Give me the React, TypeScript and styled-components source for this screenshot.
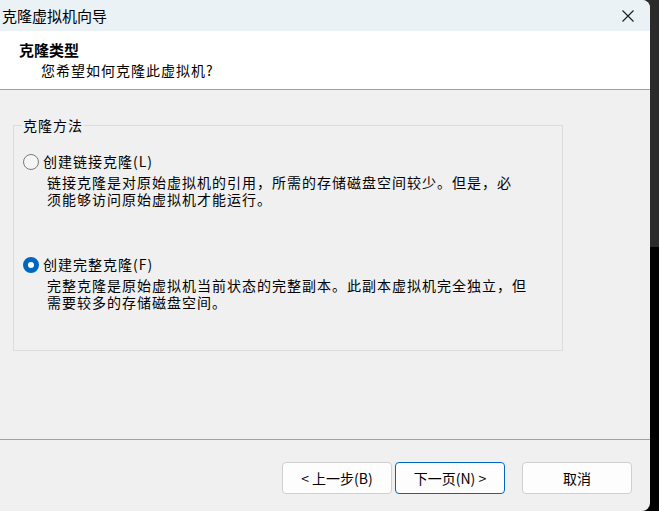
import React, { useState } from 'react';
import styled, { createGlobalStyle } from 'styled-components';

const GlobalStyle = createGlobalStyle`
  html, body {
    margin: 0;
    padding: 0;
  }
  body {
    min-height: 511px;
    background: linear-gradient(#2b2b2b 0, #2b2b2b 247px, #000 247px);
    font-family: "Noto Sans CJK SC", "Microsoft YaHei", sans-serif;
    color: #000;
  }
`;

type CloneMode = 'linked' | 'full';

const options: { id: CloneMode; label: string; lines: string[] }[] = [
  {
    id: 'linked',
    label: '创建链接克隆(L)',
    lines: ['链接克隆是对原始虚拟机的引用，所需的存储磁盘空间较少。但是，必', '须能够访问原始虚拟机才能运行。'],
  },
  {
    id: 'full',
    label: '创建完整克隆(F)',
    lines: ['完整克隆是原始虚拟机当前状态的完整副本。此副本虚拟机完全独立，但', '需要较多的存储磁盘空间。'],
  },
];

const App = () => {
  const [mode, setMode] = useState<CloneMode>('full');

  return (
    <>
      <GlobalStyle />
      <Window>
        <TitleBar>
          <span>克隆虚拟机向导</span>
          <CloseButton aria-label="关闭">
            <svg width="12" height="12" viewBox="0 0 12 12">
              <path d="M0.5 0.5 L11.5 11.5 M11.5 0.5 L0.5 11.5" stroke="#1a1a1a" strokeWidth="1.1" fill="none" />
            </svg>
          </CloseButton>
        </TitleBar>

        <Header>
          <HeaderTitle>克隆类型</HeaderTitle>
          <HeaderSub>您希望如何克隆此虚拟机?</HeaderSub>
        </Header>

        <Body>
          <Group>
            <Legend>克隆方法</Legend>
            {options.map((opt, i) => (
              <Option key={opt.id} $first={i === 0} onClick={() => setMode(opt.id)}>
                <OptionRow>
                  <Radio $checked={mode === opt.id} />
                  <OptionLabel>{opt.label}</OptionLabel>
                </OptionRow>
                <Desc>
                  {opt.lines.map((line) => (
                    <div key={line}>{line}</div>
                  ))}
                </Desc>
              </Option>
            ))}
          </Group>
        </Body>

        <Footer>
          <Button>&lt; 上一步(B)</Button>
          <Button $primary>下一页(N) &gt;</Button>
          <Button $gap>取消</Button>
        </Footer>
      </Window>
    </>
  );
};

export default App;

const Window = styled.div`
  width: 650px;
  height: 511px;
  display: flex;
  flex-direction: column;
  background: #f0f0f0;
  border-radius: 0 8px 8px 0;
  overflow: hidden;
`;

const TitleBar = styled.div`
  height: 31px;
  flex-shrink: 0;
  display: flex;
  align-items: center;
  justify-content: space-between;
  padding-left: 2px;
  background: #eaf2f5;
  font-size: 15px;
  line-height: 20px;
`;

const CloseButton = styled.div`
  width: 45px;
  height: 31px;
  display: flex;
  align-items: center;
  justify-content: center;
`;

const Header = styled.div`
  height: 59px;
  flex-shrink: 0;
  box-sizing: border-box;
  padding: 9px 0 0 19px;
  background: #fff;
  border-bottom: 1px solid #a0a0a0;
`;

const HeaderTitle = styled.div`
  font-size: 15px;
  font-weight: bold;
  line-height: 20px;
`;

const HeaderSub = styled.div`
  padding-left: 22px;
  font-size: 14px;
  letter-spacing: 1px;
  line-height: 20px;
`;

const Body = styled.div`
  flex: 1;
  padding: 35px 0 0 13px;
`;

const Group = styled.div`
  position: relative;
  width: 550px;
  height: 226px;
  box-sizing: border-box;
  padding: 27px 0 0 9px;
  border: 1px solid #dcdcdc;
`;

const Legend = styled.div`
  position: absolute;
  top: -9px;
  left: 8px;
  padding: 0 1px;
  background: #f0f0f0;
  font-size: 14px;
  letter-spacing: 1px;
  line-height: 17px;
`;

const Option = styled.div<{ $first?: boolean }>`
  margin-top: ${(p) => (p.$first ? 0 : 48)}px;
  cursor: default;
`;

const OptionRow = styled.div`
  display: flex;
  align-items: center;
  gap: 4px;
  height: 17px;
`;

const Radio = styled.span<{ $checked?: boolean }>`
  width: 16px;
  height: 16px;
  box-sizing: border-box;
  border-radius: 50%;
  flex-shrink: 0;
  border: ${(p) => (p.$checked ? '5px solid #0067c0' : '1px solid #7a7a7a')};
  background: ${(p) => (p.$checked ? '#fff' : '#f5f5f5')};
`;

const OptionLabel = styled.span`
  font-size: 14px;
  letter-spacing: 1px;
  line-height: 17px;
`;

const Desc = styled.div`
  margin-top: 4px;
  padding-left: 24px;
  font-size: 14px;
  letter-spacing: 1px;
  line-height: 17px;
  white-space: nowrap;
`;

const Footer = styled.div`
  height: 72px;
  flex-shrink: 0;
  box-sizing: border-box;
  display: flex;
  align-items: flex-start;
  gap: 3px;
  padding: 22px 0 0 282px;
  border-top: 1px solid #a0a0a0;
`;

const Button = styled.button<{ $primary?: boolean; $gap?: boolean }>`
  width: 110px;
  height: 32px;
  margin-left: ${(p) => (p.$gap ? 14 : 0)}px;
  border-radius: 4px;
  border: 1px solid ${(p) => (p.$primary ? '#0067c0' : '#d0d0d0')};
  background: #fdfdfd;
  font-family: "Noto Sans CJK SC", "Microsoft YaHei", sans-serif;
  font-size: 14px;
  color: #000;
  padding: 0;
`;
